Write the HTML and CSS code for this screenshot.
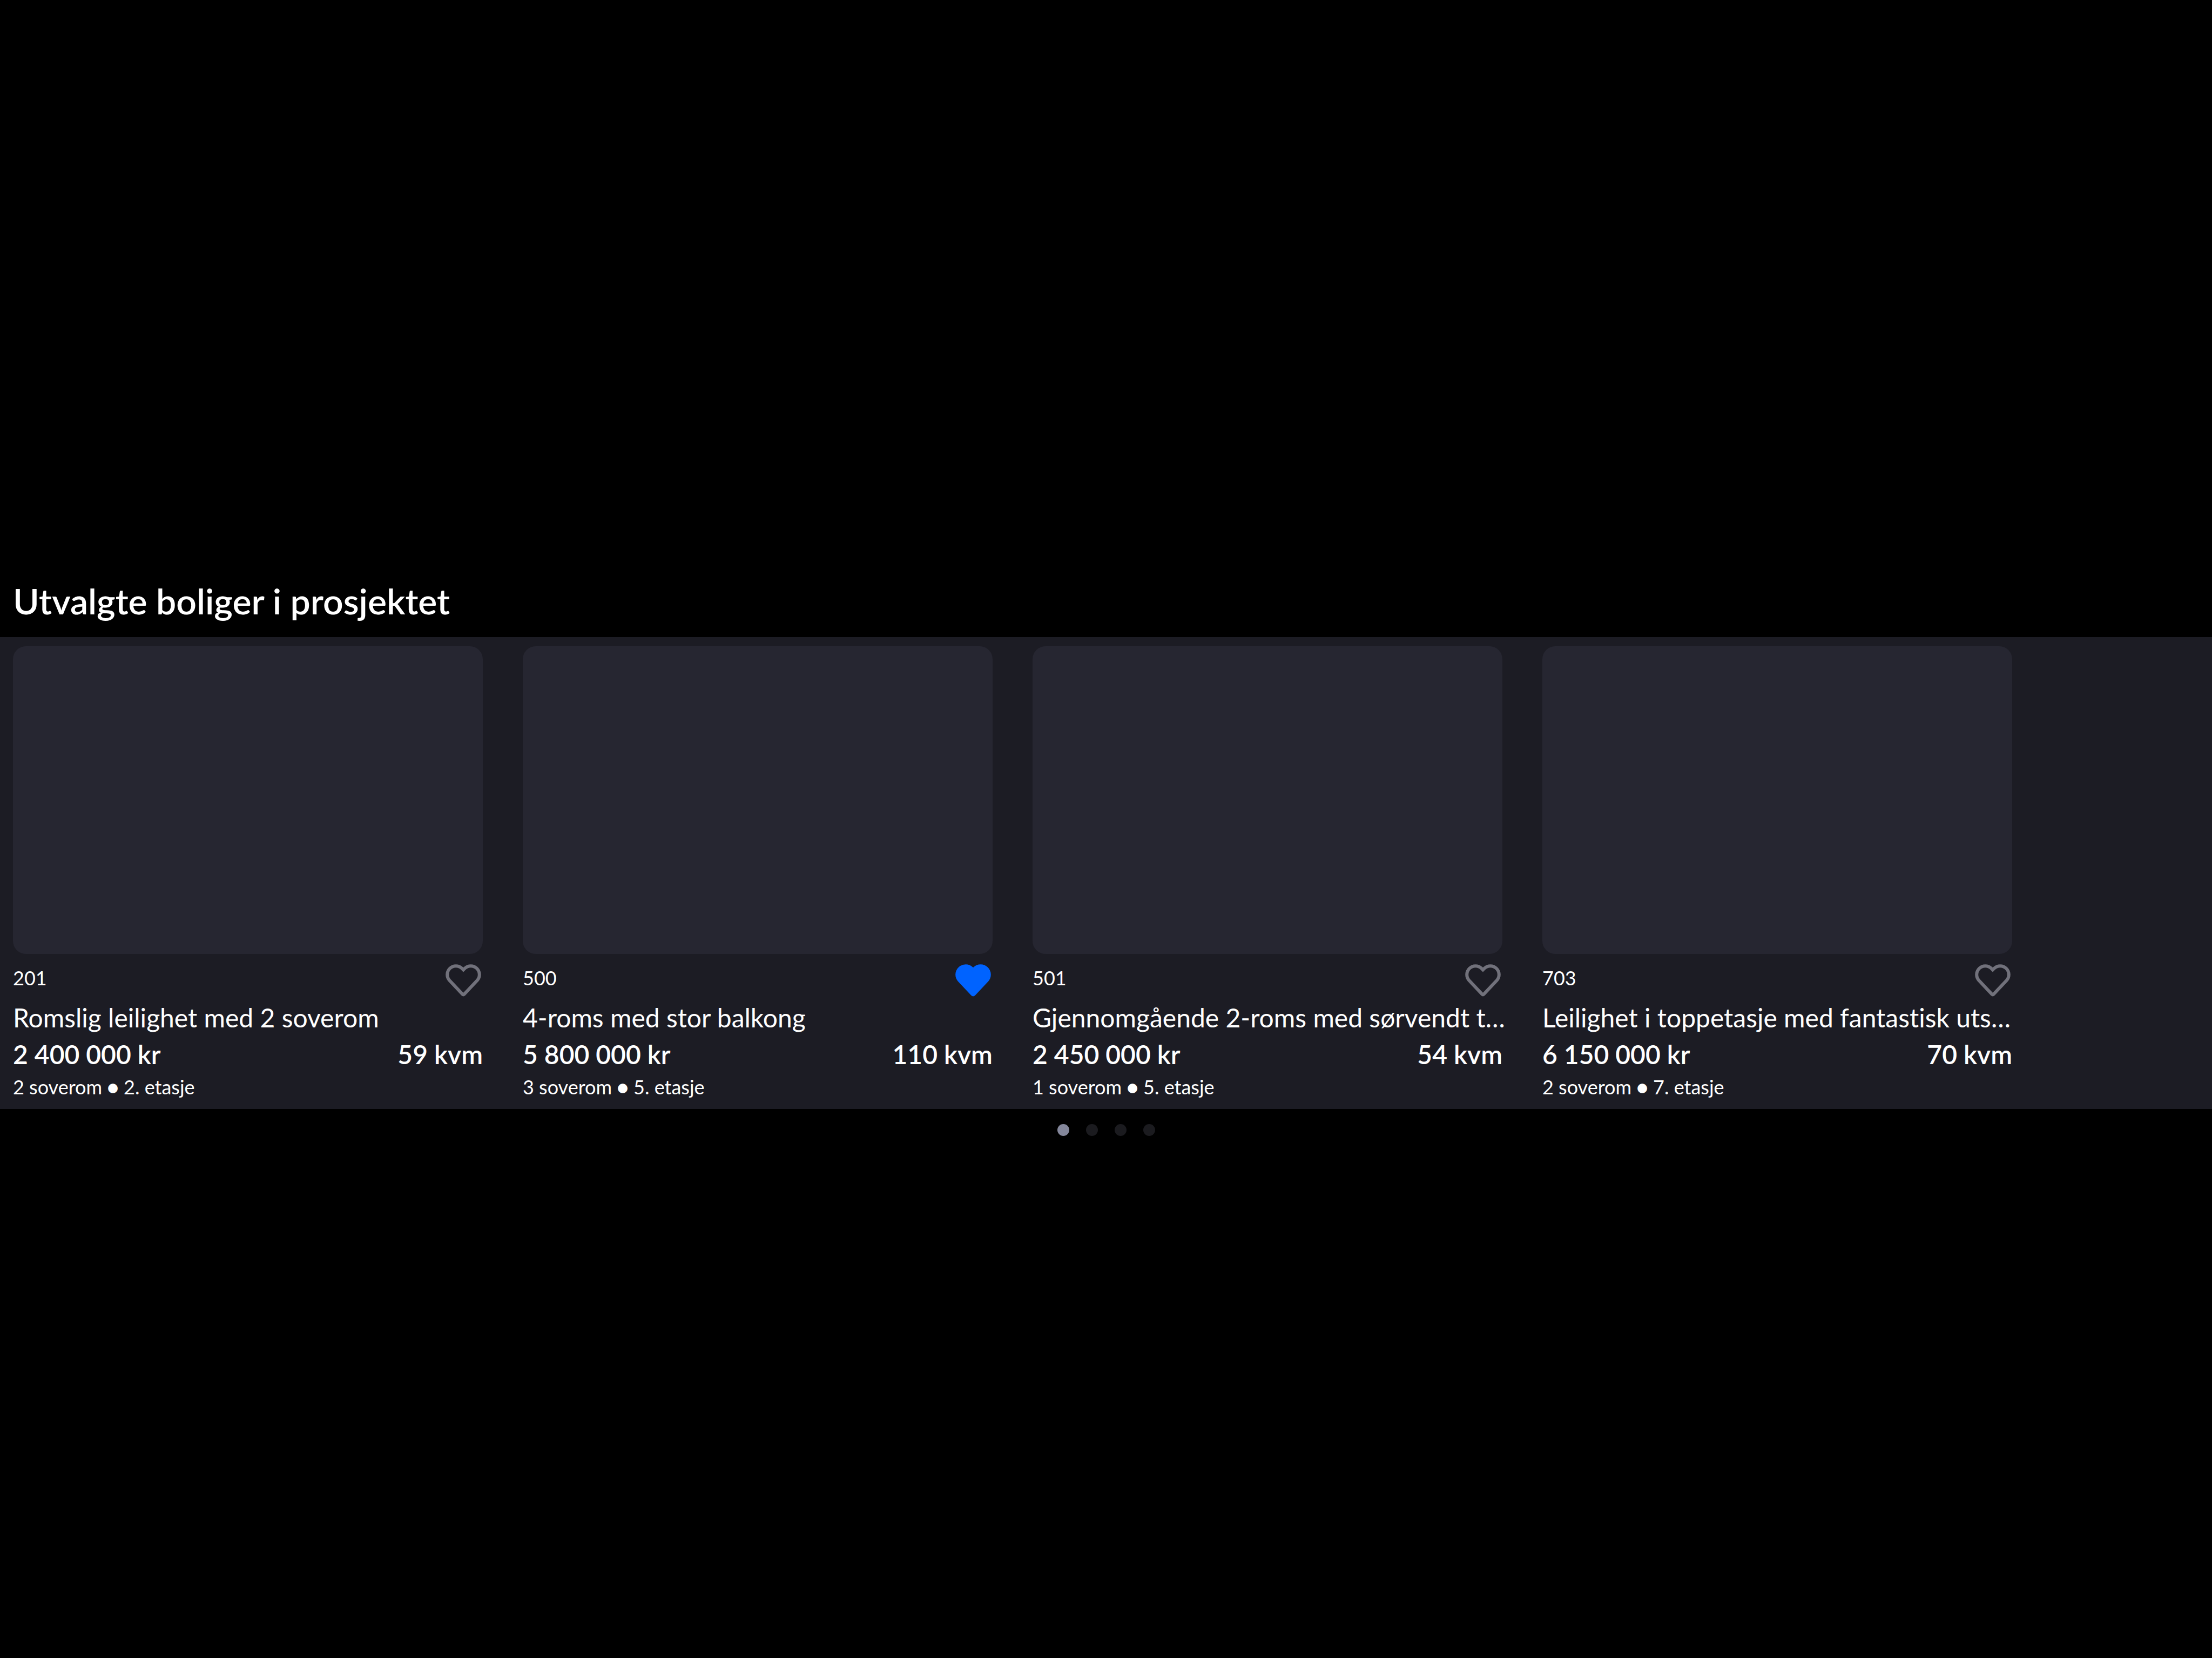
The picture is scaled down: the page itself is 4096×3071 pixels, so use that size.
FILE: index.html
```html
<!DOCTYPE html>
<html lang="no">
<head>
<meta charset="utf-8">
<meta name="viewport" content="width=device-width, initial-scale=1">
<title>Utvalgte boliger i prosjektet</title>
<link rel="stylesheet" href="styles.css">
</head>
<body>
<svg class="sprite" aria-hidden="true">
  <symbol id="heart" viewBox="0 0 72 72">
    <path d="M36 21.3 L33.3 18.7 A16 16 0 0 0 10.2 40.8 L34.5 66.6 Q36 68 37.5 66.6 L61.8 40.8 A16 16 0 0 0 38.7 18.7 Z" stroke-width="6" stroke-linejoin="miter"/>
  </symbol>
</svg>
<main class="page">
  <section class="project">
    <h2 class="heading">Utvalgte boliger i prosjektet</h2>
    <ul class="carousel">
      <li class="card">
        <div class="photo"></div>
        <div class="row unit-row">
          <span class="unit">201</span>
          <button class="favorite" type="button" aria-label="Legg til favoritt" aria-pressed="false"><svg class="icon"><use href="#heart"/></svg></button>
        </div>
        <h3 class="title">Romslig leilighet med 2 soverom</h3>
        <div class="row facts"><span>2 400 000 kr</span><span>59 kvm</span></div>
        <p class="details">2 soverom ● 2. etasje</p>
      </li>
      <li class="card">
        <div class="photo"></div>
        <div class="row unit-row">
          <span class="unit">500</span>
          <button class="favorite" type="button" aria-label="Fjern favoritt" aria-pressed="true"><svg class="icon"><use href="#heart"/></svg></button>
        </div>
        <h3 class="title">4-roms med stor balkong</h3>
        <div class="row facts"><span>5 800 000 kr</span><span>110 kvm</span></div>
        <p class="details">3 soverom ● 5. etasje</p>
      </li>
      <li class="card">
        <div class="photo"></div>
        <div class="row unit-row">
          <span class="unit">501</span>
          <button class="favorite" type="button" aria-label="Legg til favoritt" aria-pressed="false"><svg class="icon"><use href="#heart"/></svg></button>
        </div>
        <h3 class="title">Gjennomgående 2-roms med sørvendt t…</h3>
        <div class="row facts"><span>2 450 000 kr</span><span>54 kvm</span></div>
        <p class="details">1 soverom ● 5. etasje</p>
      </li>
      <li class="card">
        <div class="photo"></div>
        <div class="row unit-row">
          <span class="unit">703</span>
          <button class="favorite" type="button" aria-label="Legg til favoritt" aria-pressed="false"><svg class="icon"><use href="#heart"/></svg></button>
        </div>
        <h3 class="title">Leilighet i toppetasje med fantastisk uts…</h3>
        <div class="row facts"><span>6 150 000 kr</span><span>70 kvm</span></div>
        <p class="details">2 soverom ● 7. etasje</p>
      </li>
    </ul>
    <nav class="dots" aria-label="Sider">
      <button class="dot" type="button" aria-label="Side 1" aria-current="true"></button>
      <button class="dot" type="button" aria-label="Side 2"></button>
      <button class="dot" type="button" aria-label="Side 3"></button>
      <button class="dot" type="button" aria-label="Side 4"></button>
    </nav>
  </section>
</main>
</body>
</html>
```
FILE: styles.css
```css
* {
  box-sizing: border-box;
  margin: 0;
  padding: 0;
}

body {
  background: #000;
  color: #fff;
  font-family: Lato, "Liberation Sans", sans-serif;
  font-size: 36px;
}

button {
  border: 0;
  background: none;
  cursor: pointer;
}

.sprite {
  display: none;
}

.page {
  display: flex;
  flex-direction: column;
  justify-content: center;
  min-height: 100vh;
  padding-top: 104px;
}

.heading {
  padding: 0 24px;
  margin-bottom: 25px;
  font-size: 66px;
  font-weight: 600;
  line-height: 84px;
}

.carousel {
  display: flex;
  gap: 74px;
  padding: 17px 24px 15px;
  overflow: hidden;
  background: #1c1c24;
  list-style: none;
}

.card {
  flex: 0 0 870px;
  min-width: 0;
}

.photo {
  height: 570px;
  margin-bottom: 8px;
  border-radius: 24px;
  background: #262631;
}

.row {
  display: flex;
  align-items: center;
  justify-content: space-between;
}

.unit-row {
  margin-bottom: 4px;
}

.favorite {
  width: 72px;
  height: 72px;
  color: #71717b;
}

.icon {
  display: block;
  width: 72px;
  height: 72px;
  fill: none;
  stroke: currentColor;
}

.favorite[aria-pressed="true"] {
  color: #0063ff;
}

.favorite[aria-pressed="true"] .icon {
  fill: currentColor;
}

.title {
  font-size: 48px;
  font-weight: 400;
  line-height: 68px;
  font-variant-ligatures: none;
  white-space: nowrap;
}

.facts {
  font-size: 48px;
  font-weight: 600;
  line-height: 68px;
}

.details {
  line-height: 52px;
}

.dots {
  display: flex;
  gap: 31px;
  justify-content: center;
  padding-top: 28px;
}

.dot {
  width: 22px;
  height: 22px;
  border-radius: 50%;
  background: #1b1b1f;
}

.dot[aria-current="true"] {
  background: #84879b;
}
```
